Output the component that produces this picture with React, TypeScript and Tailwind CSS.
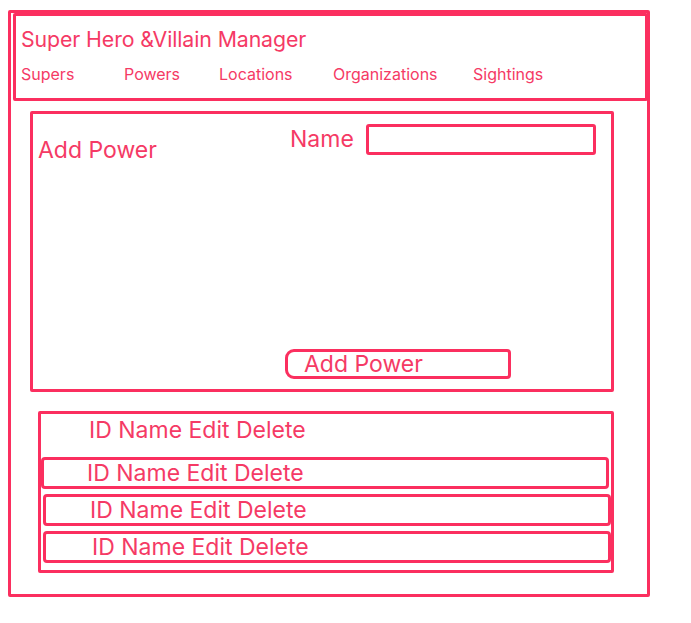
const rows = ["ID Name Edit Delete", "ID Name Edit Delete", "ID Name Edit Delete"];

const navItems = [
  { label: "Supers", width: "w-[103px]" },
  { label: "Powers", width: "w-[95px]" },
  { label: "Locations", width: "w-[114px]" },
  { label: "Organizations", width: "w-[140px]" },
  { label: "Sightings", width: "w-auto" },
];

export default function App() {
  return (
    <div className="w-[691px] h-[623px] bg-white font-['Inter',sans-serif] text-[#f53a65] pt-[10px] pl-[8px]">
      {/* outer sketch frame */}
      <div className="w-[642px] h-[587px] border-[3px] border-[#fb2f5f] rounded-[2px] flex flex-col">
        {/* header */}
        <div className="ml-[2px] w-[635px] h-[88px] border-[3px] border-[#fb2f5f] rounded-[2px] px-[5px] pt-[9px]">
          <h1 className="text-[21.3px] leading-[28px] tracking-[-0.1px]">Super Hero &amp;Villain Manager</h1>
          <nav className="flex mt-[11px] text-[16px] leading-[20px]">
            {navItems.map((item) => (
              <a key={item.label} className={`${item.width} shrink-0`}>
                {item.label}
              </a>
            ))}
          </nav>
        </div>

        {/* add power form */}
        <div className="ml-[19px] mt-[10px] w-[584px] h-[281px] border-[3px] border-[#fb2f5f] rounded-[2px] flex flex-col">
          <div className="flex items-start mt-[10px]">
            <p className="w-[257px] pl-[5px] pt-[11px] text-[23px] leading-[30px]">Add Power</p>
            <p className="text-[23px] leading-[30px]">Name</p>
            <input
              className="ml-[12px] w-[230px] h-[31px] border-[3px] border-[#fb2f5f] rounded-[3px] outline-none"
              aria-label="Name"
            />
          </div>
          <button className="mt-auto mb-[10px] ml-[252px] w-[226px] h-[30px] border-[3px] border-[#fb2f5f] rounded-l-[9px] rounded-r-[4px] text-left pl-[16px] text-[23px] leading-[22px]">
            Add Power
          </button>
        </div>

        {/* list */}
        <div className="ml-[27px] mt-[19px] w-[576px] h-[162px] border-[3px] border-[#fb2f5f] rounded-[2px] flex flex-col">
          <p className="pl-[48px] pt-[2px] text-[23px] leading-[28px]">ID Name Edit Delete</p>
          <div className="flex flex-col mt-[13px] gap-[5px]">
            {rows.map((r, i) => (
              <div
                key={i}
                className={`${i === 0 ? "ml-0" : "ml-[2px]"} w-[568px] h-[32px] border-[3px] border-[#fb2f5f] rounded-[4px] flex items-center ${
                  i === 0 ? "pl-[43px]" : i === 1 ? "pl-[44px]" : "pl-[46px]"
                } text-[23px] leading-[26px]`}
              >
                {r}
              </div>
            ))}
          </div>
        </div>
      </div>
    </div>
  );
}
